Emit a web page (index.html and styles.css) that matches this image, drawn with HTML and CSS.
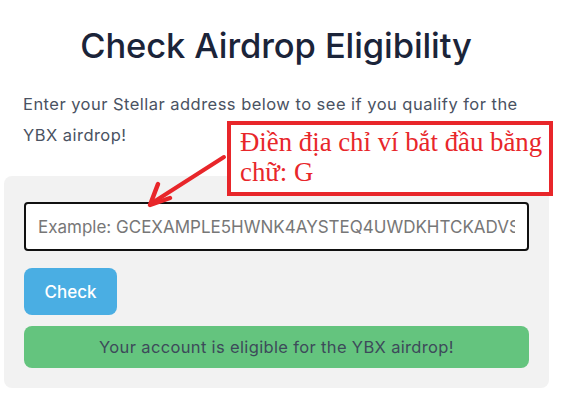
FILE: index.html
```html
<!DOCTYPE html>
<html>
<head>
<meta charset="utf-8">
<link rel="stylesheet" href="styles.css">
</head>
<body>
<div class="page">
  <h1 class="title">Check Airdrop Eligibility</h1>
  <p class="lead">Enter your Stellar address below to see if you qualify for the YBX airdrop!</p>
  <div class="card">
    <input class="addr" type="text" placeholder="Example: GCEXAMPLE5HWNK4AYSTEQ4UWDKHTCKADVS3JIUTMSXP7NLKKX5UJ2R">
    <button class="btn">Check</button>
    <div class="result">Your account is eligible for the YBX airdrop!</div>
  </div>
  <div class="note">Điền địa chỉ ví bắt đầu bằng<br>chữ: G</div>
  <svg class="arrow" width="100" height="70" viewBox="0 0 100 70">
    <line x1="84" y1="3" x2="12" y2="49" stroke="#e8262a" stroke-width="4" stroke-linecap="round"/>
    <polyline points="18,30 10,51 30,44" fill="none" stroke="#e8262a" stroke-width="4.5" stroke-linecap="round" stroke-linejoin="round"/>
  </svg>
</div>
</body>
</html>
```
FILE: styles.css
```css
* { box-sizing: border-box; }
html, body { margin: 0; padding: 0; background: #fff; }
body { font-family: "Inter", "Open Sans", sans-serif; }
.page { position: relative; width: 576px; height: 405px; overflow: hidden; padding: 0 4px; }
.title {
  margin: 0; padding-top: 22px;
  width: 544px; text-align: center;
  font-size: 34.5px; font-weight: 500; color: #1b2439; letter-spacing: -0.1px;
  line-height: 48px;
}
.lead {
  margin: 19px 0 0 19px; width: 510px;
  font-size: 16.5px; line-height: 31px; color: #4a5262; letter-spacing: 0.47px;
}
.card {
  margin-top: 25px; width: 545px; height: 212px;
  background: #f2f2f2; border-radius: 8px;
  padding: 26px 19px 0 20px;
  display: flex; flex-direction: column; align-items: flex-start;
}
.addr {
  width: 505px; height: 49px; border: 2px solid #111; border-radius: 4px;
  padding: 0 12px; font-family: inherit; font-size: 17px; color: #333; background: #fff;
}
.addr::placeholder { color: #777; }
.btn {
  margin-top: 17px; width: 93px; height: 47px; border: none; border-radius: 8px;
  background: #4aaee3; color: #fff; font-family: inherit; font-size: 17px; font-weight: 500;
}
.result {
  margin-top: 11px; width: 505px; height: 42px; border-radius: 8px;
  background: #64c47e; color: #3d4a5a; font-size: 16.5px; letter-spacing: 0.35px;
  display: flex; align-items: center; justify-content: center;
}
.note {
  position: absolute; left: 227px; top: 121px; width: 326px; height: 75px;
  border: 4px solid #e8262a; background: #fff;
  padding: 2px 0 0 9px;
  font-family: "Liberation Serif", serif; font-size: 26.8px; line-height: 30px; color: #e8262a;
  white-space: nowrap; overflow: hidden;
}
.arrow { position: absolute; left: 140px; top: 154px; }
```
